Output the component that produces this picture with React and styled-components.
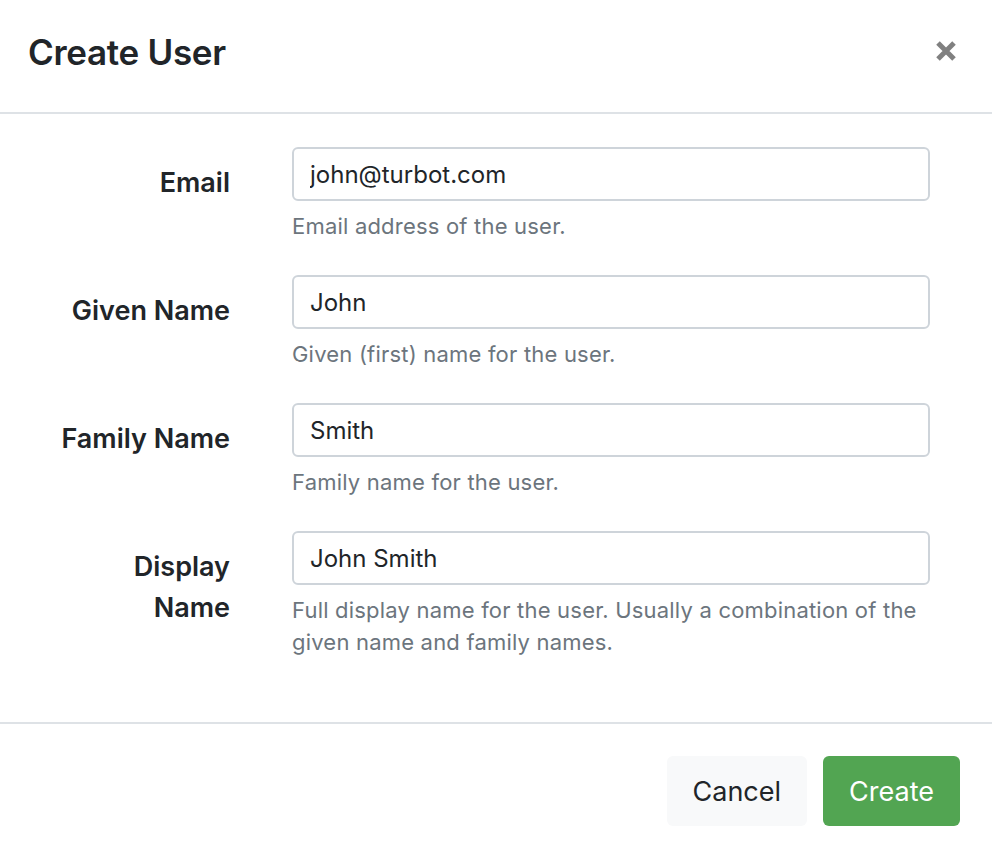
import React from "react";
import styled, { createGlobalStyle } from "styled-components";

const Global = createGlobalStyle`
  html, body { margin: 0; padding: 0; background: #ffffff; }
  body { font-family: Inter, "Noto Sans", "Liberation Sans", sans-serif; color: #212529; }
  * { box-sizing: border-box; }
`;

const Modal = styled.div`
  width: 992px;
  height: 856px;
  display: flex;
  flex-direction: column;
  background: #fff;
`;

const Header = styled.header`
  height: 114px;
  border-bottom: 2px solid #dee2e6;
  display: flex;
  align-items: center;
  justify-content: space-between;
  padding: 0 34px 0 28px;
`;

const Title = styled.h5`
  margin: 0 0 8px 0;
  font-size: 35px;
  font-weight: 600;
  letter-spacing: -0.3px;
  color: #212529;
  line-height: 1.5;
`;

const CloseButton = styled.button`
  border: 0;
  background: transparent;
  padding: 0;
  width: 24px;
  height: 24px;
  margin-bottom: 10px;
  display: flex;
  align-items: center;
  justify-content: center;
  cursor: pointer;
`;

const Body = styled.div`
  padding: 33px 62px 40px 55px;
  display: flex;
  flex-direction: column;
  gap: 33px;
`;

const Row = styled.div`
  display: grid;
  grid-template-columns: 175px 1fr;
  column-gap: 62px;
`;

const Label = styled.label`
  text-align: right;
  font-size: 27px;
  font-weight: 600;
  line-height: 41px;
  padding-top: 15px;
  color: #212529;
`;

const Field = styled.div`
  display: flex;
  flex-direction: column;
`;

const Input = styled.input`
  height: 54px;
  width: 100%;
  border: 2px solid #ced4da;
  border-radius: 6px;
  padding: 0 16px;
  font-family: inherit;
  font-size: 24px;
  color: #212529;
  background: #fff;
  outline: none;
`;

const Help = styled.small`
  margin-top: 9px;
  font-size: 22px;
  line-height: 32px;
  color: #6c757d;
  letter-spacing: 0.2px;
`;

const Footer = styled.footer`
  border-top: 2px solid #dee2e6;
  margin-top: auto;
  padding: 32px 32px 30px;
  display: flex;
  justify-content: flex-end;
  gap: 16px;
`;

const Button = styled.button`
  height: 70px;
  padding: 0 26px;
  border: 0;
  border-radius: 6px;
  font-family: inherit;
  font-size: 27px;
  font-weight: 400;
  background: ${(p) => (p.$primary ? "#52a552" : "#f8f9fa")};
  color: ${(p) => (p.$primary ? "#ffffff" : "#212529")};
  cursor: pointer;
`;

const fields = [
  { label: "Email", value: "john@turbot.com", help: "Email address of the user." },
  { label: "Given Name", value: "John", help: "Given (first) name for the user." },
  { label: "Family Name", value: "Smith", help: "Family name for the user." },
  {
    label: "Display Name",
    value: "John Smith",
    help: "Full display name for the user. Usually a combination of the given name and family names.",
  },
];

export default function App() {
  return (
    <>
      <Global />
      <Modal>
        <Header>
          <Title>Create User</Title>
          <CloseButton aria-label="Close">
            <svg width="22" height="22" viewBox="0 0 22 22">
              <path d="M3 3 L19 19 M19 3 L3 19" stroke="#808080" strokeWidth="5" />
            </svg>
          </CloseButton>
        </Header>
        <Body>
          {fields.map((f) => (
            <Row key={f.label}>
              <Label>{f.label}</Label>
              <Field>
                <Input defaultValue={f.value} />
                <Help>{f.help}</Help>
              </Field>
            </Row>
          ))}
        </Body>
        <Footer>
          <Button>Cancel</Button>
          <Button $primary>Create</Button>
        </Footer>
      </Modal>
    </>
  );
}
